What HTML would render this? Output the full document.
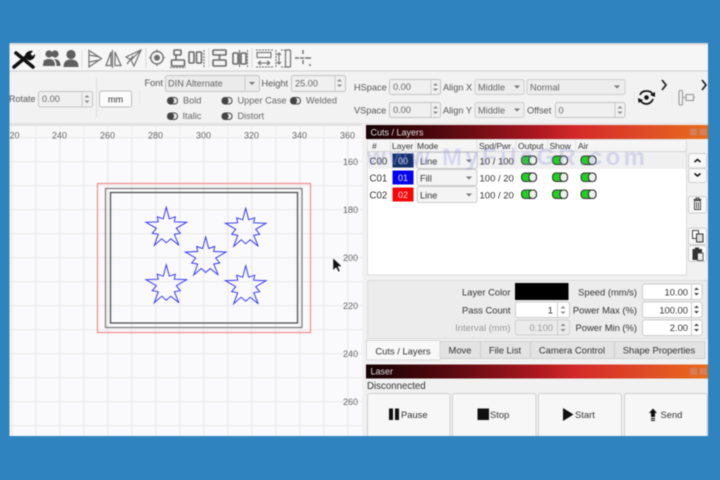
<!DOCTYPE html>
<html><head><meta charset="utf-8"><style>
html,body{margin:0;padding:0;width:720px;height:480px;overflow:hidden;background:#2f83bf}
svg{display:block;filter:blur(.45px)}
text{font-family:"Liberation Sans",sans-serif;font-size:9.2px;fill:#333}
.g text{fill:#666;font-size:9px}
.p text{font-size:9.4px}
.e{text-anchor:end}.m{text-anchor:middle}
</style></head><body>
<svg width="720" height="480" viewBox="0 0 720 480" xmlns="http://www.w3.org/2000/svg">
<defs>
<linearGradient id="bar" x1="0" x2="1" y1="0" y2="0">
<stop offset="0" stop-color="#160306"/><stop offset=".1" stop-color="#300508"/><stop offset=".25" stop-color="#5a0a10"/><stop offset=".5" stop-color="#ab1820"/><stop offset=".62" stop-color="#d42a2a"/><stop offset=".82" stop-color="#df4c26"/><stop offset="1" stop-color="#e96c1c"/>
</linearGradient>
<g id="on"><rect x=".5" y=".5" width="15" height="8.5" rx="3.5" fill="#1fd01f" stroke="#333"/><rect x="8" y=".5" width="7.5" height="8.5" rx="3.5" fill="#eef2ee" stroke="#333" stroke-width="1.1"/></g>
<g id="off"><rect x=".5" y=".5" width="10" height="6.5" rx="3" fill="#e8e8e8" stroke="#444"/><rect x=".5" y=".5" width="6.5" height="6.5" rx="3" fill="#444"/></g>
<g id="ar"><path d="M-2.5-1.5L0-4 2.5-1.5z M-2.5 1.5L0 4 2.5 1.5z" fill="#888"/></g>
<g id="ard"><path d="M-2.5-1.5L0-4 2.5-1.5z M-2.5 1.5L0 4 2.5 1.5z" fill="#444"/></g>
<path id="dn" d="M-3-1.5H3L0 1.5z" fill="#777"/>
<path id="star" d="M0-19.5L3-8 9-10 8-5 20.3-4.5 10 1.5 14 6.5 8 7.5 12.6 18.5 4.5 12 0 16-4.500 12-12 18.5-8 7.5-14 6.5-10 1.5-20.3-4.5-8-5-9-10-3-8z" fill="none" stroke="#3030f8" stroke-width=".95"/>
<pattern id="grid" x="35.2" y="137" width="24" height="24" patternUnits="userSpaceOnUse"><rect width="24" height="24" fill="#fafafc"/><rect width="1.2" height="24" fill="#e8e8e8"/><rect y="0" width="24" height="1.2" fill="#ebebeb"/></pattern>
</defs>

<rect x="9.5" y="43" width="698.5" height="393" fill="#f1f1f1"/>
<rect x="9.5" y="43" width="698.500" height="2" fill="#dcdcdc"/>
<rect x="9.5" y="45" width="698.5" height="26" fill="#f6f6f6"/>
<rect x="9.5" y="70.5" width="698.5" height="1" fill="#cfcfcf"/>
<rect x="9.5" y="71.5" width="698.5" height="52" fill="#f2f2f3"/>
<rect x="9.5" y="123" width="698.5" height="3" fill="#e2e2e2"/>

<g>
<path d="M16 53L33 67M14 67L26 57" stroke="#111" stroke-width="3.6" fill="none" stroke-linecap="round"/>
<path d="M25 58C24 53 29 50 33 51L30.500 54 32.500 56 35 54C35.500 58 32 61 28 60z" fill="#111"/>
</g>
<path d="M37 50V68M39.5 50V68" stroke="#ddd" stroke-dasharray="1 1.2"/>
<g fill="#5f5f5f">
<circle cx="49" cy="54" r="3.6"/><circle cx="55" cy="54" r="3.6"/><path d="M43 66C43 60 46 59 49 59 52 59 55 60 55 66z"/><path d="M54 59C58 59 60.5 61 60.5 66H56.5C56.5 63 56 61 54 59z"/><path d="M44 60h2v6h-3z"/>
<circle cx="71" cy="54.5" r="4.6"/><path d="M63.5 67C63.5 61 67 59.5 71 59.5 75 59.5 78.5 61 78.5 67z"/>
</g>
<path d="M82 50V68" stroke="#e0e0e0"/>
<g fill="none" stroke="#707070" stroke-width="1.200">
<path d="M89 50.5V67L101.5 58.5z M89 55L100 57M89 62L100 60"/>
<path d="M112.5 50V68M111 52V65.5H106zM115 52V65.5H121z"/>
<path d="M126 57L141 50 134 66 131 60zM131 60L141 50M127 64L133 56"/>
<path d="M146 48V68" stroke="#ddd"/>
<circle cx="157" cy="57.7" r="6.2" stroke-width="1.4"/><circle cx="157" cy="57.7" r="2.4" fill="#707070"/><path d="M157 49.5V51.5M157 64V66M149 57.7H151M163 57.7H165"/>
</g>
<g fill="none" stroke="#6a6a6a" stroke-width="1.6">
<rect x="174" y="50" width="7" height="5" rx="1"/><rect x="171.5" y="60" width="13" height="6" rx="1"/><path d="M176 55V60"/><path d="M170 67.5H186" stroke-dasharray="2 1" stroke-width="1"/>
<rect x="189" y="52" width="5" height="11" rx="1"/><rect x="196.5" y="52" width="5" height="11" rx="1"/><path d="M204 50V67" stroke-dasharray="2 1" stroke-width="1"/>
<path d="M209 48V68" stroke="#ddd" stroke-width="1"/>
<rect x="213" y="50" width="13" height="5" rx="1"/><rect x="213" y="60" width="13" height="6" rx="1"/><path d="M219.500 55V60"/>
<rect x="233" y="53" width="5" height="11" rx="1"/><rect x="241" y="53" width="5" height="11" rx="1"/><path d="M239.500 50V67" stroke-width="1.1"/><path d="M247.500 50V67" stroke-dasharray="2 1" stroke-width="1"/>
</g>
<g fill="none" stroke="#707070" stroke-width="1.100">
<path d="M252 48V68" stroke="#ddd"/>
<path d="M256 50H273M256 67H273" stroke-dasharray="2 1"/><rect x="257" y="52.500" width="14" height="5"/><path d="M258 63H270M258 63L261 61M258 63L261 65M270 63L267 61M270 63L267 65"/>
<path d="M276 50V67M281 50H286M281 67H286" stroke-dasharray="2 1"/><path d="M279 53V64M277 55L279 53 281 55M277 62L279 64 281 62"/>
<rect x="285.500" y="50" width="5" height="17" rx="1" stroke-width="1.2"/>
<path d="M295 58H299M305 58H311M303 50V54M303 60V64M309 65H311" stroke-width="1.4"/><path d="M300 58H304" stroke-width="1.4"/>
</g>

<text x="9" y="102" style="font-size:9px;fill:#555">Rotate</text>
<rect x="38.500" y="91.500" width="54" height="15.500" rx="2" fill="#f0f0f0" stroke="#c4c4c4"/><path d="M82 92V107" stroke="#ccc"/>
<text x="42" y="102" style="fill:#666">0.00</text><use href="#ar" x="87" y="99"/>
<path d="M96.500 78V118" stroke="#ddd"/>
<rect x="99.500" y="91" width="32" height="16" rx="2" fill="#fbfbfb" stroke="#bdbdbd"/>
<text x="115.500" y="102.500" class="m">mm</text>
<path d="M139.500 91V104" stroke="#d8d8d8" stroke-dasharray="1 1.2"/>

<text x="144.500" y="86" style="fill:#555">Font</text>
<rect x="165.500" y="75.500" width="94" height="16" rx="2" fill="#ebebeb" stroke="#c4c4c4"/>
<path d="M245 76V91" stroke="#ccc"/>
<text x="168" y="86.500" style="fill:#666">DIN Alternate</text><use href="#dn" x="252" y="83.500"/>
<text x="261.500" y="86.500" style="fill:#555">Height</text>
<rect x="291.500" y="75.500" width="54" height="16" rx="2" fill="#f0f0f0" stroke="#c4c4c4"/><path d="M335 76V91" stroke="#ccc"/>
<text x="295" y="86.500" style="fill:#666">25.00</text><use href="#ar" x="339.500" y="83"/>

<use href="#off" x="167" y="97"/><text x="183" y="103.500" style="fill:#666">Bold</text>
<use href="#off" x="221.500" y="97"/><text x="237.500" y="103.500" style="fill:#666">Upper Case</text>
<use href="#off" x="290" y="97"/><text x="306" y="103.500" style="fill:#666">Welded</text>
<use href="#off" x="167" y="112.500"/><text x="182.500" y="119" style="fill:#666">Italic</text>
<use href="#off" x="221.500" y="112.500"/><text x="237.500" y="119" style="fill:#666">Distort</text>

<text x="354" y="90.500" style="fill:#555">HSpace</text>
<rect x="389.500" y="79.500" width="51" height="15" rx="2" fill="#f0f0f0" stroke="#c4c4c4"/><path d="M431 80V94" stroke="#ccc"/>
<text x="393" y="90" style="fill:#666">0.00</text><use href="#ar" x="435.500" y="87"/>
<text x="354" y="113.500" style="fill:#555">VSpace</text>
<rect x="389.500" y="102.500" width="51" height="15" rx="2" fill="#f0f0f0" stroke="#c4c4c4"/><path d="M431 103V117" stroke="#ccc"/>
<text x="393" y="113" style="fill:#666">0.00</text><use href="#ar" x="435.500" y="110"/>

<text x="443" y="90.500" style="fill:#555">Align X</text>
<rect x="475" y="79.500" width="49" height="15" rx="2" fill="#ededed" stroke="#cfcfcf"/><text x="478" y="90.500" style="fill:#666">Middle</text><use href="#dn" x="517" y="87"/>
<rect x="527" y="79.500" width="98" height="15" rx="2" fill="#ededed" stroke="#cfcfcf"/><text x="530" y="90.500" style="fill:#666">Normal</text><use href="#dn" x="617" y="87"/>
<text x="443" y="113.500" style="fill:#555">Align Y</text>
<rect x="475" y="102.500" width="49" height="15" rx="2" fill="#ededed" stroke="#cfcfcf"/><text x="478" y="113.500" style="fill:#666">Middle</text><use href="#dn" x="517" y="110"/>
<text x="527" y="113.500" style="fill:#555">Offset</text>
<rect x="555.500" y="102.500" width="69.500" height="15" rx="2" fill="#f0f0f0" stroke="#c4c4c4"/><path d="M615 103V117" stroke="#ccc"/>
<text x="558.500" y="113.500" style="fill:#666">0</text><use href="#ar" x="620" y="110"/>

<path d="M634 92V104M672 92V104" stroke="#d8d8d8" stroke-dasharray="1 1.200"/>
<path d="M662 80L666 85 662 90M702 80L706 85 702 90" fill="none" stroke="#222" stroke-width="1.700"/>
<g fill="none" stroke="#111" stroke-width="1.800">
<path d="M640 95C641 92 644 91 646.500 91 649 91 651.500 92 652.500 94"/><path d="M653 99C652 102 649 104 646.500 104 644 104 641.500 102.500 640.500 100.500"/>
</g>
<path d="M650 95L655 92 655 97zM643 100L638 98 638.500 103z" fill="#111"/>
<circle cx="646.500" cy="97.500" r="2.300" fill="#111"/>
<g fill="none" stroke="#999" stroke-width="1.100"><rect x="679" y="90.500" width="3.500" height="14.500" rx="1"/><rect x="686" y="94.500" width="7.500" height="6"/><path d="M682.500 97.500H686M693.500 97.500H695"/></g>

<rect x="9.500" y="126" width="352.500" height="310" fill="url(#grid)"/>
<rect x="9.500" y="126" width="352.500" height="11" fill="#f6f6f6" opacity=".55"/>
<g class="g">
<text x="9.500" y="138.500">20</text><text x="59.500" y="138.500" class="m">240</text><text x="107.500" y="138.500" class="m">260</text><text x="155.500" y="138.500" class="m">280</text><text x="203.500" y="138.500" class="m">300</text><text x="251.500" y="138.500" class="m">320</text><text x="299.500" y="138.500" class="m">340</text><text x="347.500" y="138.500" class="m">360</text>
<text x="358" y="165" class="e">160</text><text x="358" y="213" class="e">180</text><text x="358" y="261" class="e">200</text><text x="358" y="309" class="e">220</text><text x="358" y="357" class="e">240</text><text x="358" y="405" class="e">260</text>
</g>
<rect x="97.500" y="183.500" width="213" height="149" fill="none" stroke="#f48a8a" stroke-width="1.200"/>
<rect x="105.500" y="188.500" width="196.500" height="139" fill="none" stroke="#777" stroke-width="1.200"/>
<rect x="110.500" y="192.500" width="187" height="130.500" fill="none" stroke="#444" stroke-width="1.200"/>
<use href="#star" x="166.300" y="226.800"/><use href="#star" x="245.700" y="227.800"/><use href="#star" x="205.700" y="256.500"/><use href="#star" x="166.300" y="284.200"/><use href="#star" x="245.700" y="285.200"/>
<path d="M333 258V270.500L336 267.500 338.500 272 340 271 338 266.500 342 266.500z" fill="#111" stroke="#fff" stroke-width=".5"/>

<rect x="362" y="124" width="346" height="312" fill="#f1f1f1"/>
<rect x="366" y="125" width="342" height="14" fill="url(#bar)"/>
<text x="370.500" y="135.500" style="fill:#ddd;font-size:9px">Cuts / Layers</text>
<rect x="690" y="128.500" width="7" height="7" fill="#c89080" opacity=".6"/><rect x="699.500" y="128.500" width="7" height="7" fill="#c89080" opacity=".6"/>

<rect x="367.500" y="139.500" width="319" height="135.500" fill="#fff" stroke="#ddd"/>
<rect x="368" y="140" width="318" height="11" fill="#f5f5f5"/>
<path d="M368 151.500H686" stroke="#d5d5d5"/>
<path d="M390.500 140V151M415.500 140V151M477 140V151M516 140V151M547.500 140V151M575.500 140V151" stroke="#e2e2e2"/>
<text x="372" y="149" style="font-size:8.500px">#</text><text x="392" y="149" style="font-size:8.500px">Layer</text><text x="417" y="149" style="font-size:8.500px">Mode</text><text x="479" y="149" style="font-size:8.500px">Spd/Pwr</text><text x="518" y="149" style="font-size:8.500px">Output</text><text x="549.500" y="149" style="font-size:8.500px">Show</text><text x="578" y="149" style="font-size:8.500px">Air</text>
<rect x="368" y="152" width="318" height="17" fill="#f0f0f0"/>

<text x="369.500" y="164.500" style="font-size:9.700px">C00</text>
<rect x="392.500" y="153.500" width="21" height="14" fill="#11306a"/><text x="403" y="164" class="m" style="fill:#c8d0e8;font-size:9px">00</text>
<rect x="417" y="152.500" width="60" height="16" rx="2" fill="#f4f4f4" stroke="#ccc"/><text x="420" y="164.500">Line</text><use href="#dn" x="469" y="161"/>
<text x="479.500" y="164.500" style="font-size:9.500px">10 / 100</text>
<use href="#on" x="521" y="155.500"/><use href="#on" x="552" y="155.500"/><use href="#on" x="580.500" y="155.500"/>

<text x="369.500" y="181.500" style="font-size:9.700px">C01</text>
<rect x="392.500" y="170.500" width="21" height="14" fill="#0606ee"/><text x="403" y="181" class="m" style="fill:#dde;font-size:9px">01</text>
<rect x="417" y="169.500" width="60" height="16" rx="2" fill="#f4f4f4" stroke="#ccc"/><text x="420" y="181.500">Fill</text><use href="#dn" x="469" y="178"/>
<text x="479.500" y="181.500" style="font-size:9.500px">100 / 20</text>
<use href="#on" x="521" y="172.500"/><use href="#on" x="552" y="172.500"/><use href="#on" x="580.500" y="172.500"/>

<text x="369.500" y="198.500" style="font-size:9.700px">C02</text>
<rect x="392.500" y="187.500" width="21" height="14" fill="#f50808"/><text x="403" y="198" class="m" style="fill:#fdd;font-size:9px">02</text>
<rect x="417" y="186.500" width="60" height="16" rx="2" fill="#f4f4f4" stroke="#ccc"/><text x="420" y="198.500">Line</text><use href="#dn" x="469" y="195"/>
<text x="479.500" y="198.500" style="font-size:9.500px">100 / 20</text>
<use href="#on" x="521" y="189.500"/><use href="#on" x="552" y="189.500"/><use href="#on" x="580.500" y="189.500"/>

<text x="367" y="165" style="font-size:24px;font-weight:bold;letter-spacing:3.300px;fill:#8f8fe0;opacity:.28">www.MyFileGR.com</text>

<g fill="#f8f8f8" stroke="#cfcfcf">
<rect x="688.500" y="153.500" width="18" height="14.500" rx="2"/><rect x="688.500" y="168.500" width="18" height="14" rx="2"/><rect x="688.500" y="196.500" width="18" height="16.500" rx="2"/><rect x="688.500" y="228" width="18" height="16.500" rx="2"/><rect x="688.500" y="245.500" width="18" height="16" rx="2"/>
</g>
<path d="M694.500 162L697.500 159.500 700.500 162M694.500 173.500L697.500 176 700.500 173.500" fill="none" stroke="#111" stroke-width="1.600"/>
<path d="M693.500 199.500H701.500M696 199V198H699V199" stroke="#444" fill="none"/><path d="M694.500 200.500V209.500H700.500V200.500zM696.500 202V208.500M698.500 202V208.500" fill="none" stroke="#444" stroke-width=".9"/>
<rect x="692.500" y="230.500" width="6" height="8" fill="#fff" stroke="#444"/><rect x="696.500" y="234" width="6.500" height="8" fill="#ddd" stroke="#333"/>
<rect x="692.500" y="249" width="9.500" height="11" fill="#333"/><rect x="695" y="247.500" width="4" height="2.500" fill="#333"/><rect x="697.500" y="253" width="5.500" height="7.500" fill="#eee" stroke="#333" stroke-width=".8"/>

<rect x="367.500" y="280.500" width="339.500" height="58" fill="#ececec" stroke="#dedede"/>
<g class="p">
<text x="510.500" y="295.500" class="e">Layer Color</text>
<rect x="515" y="283" width="53.500" height="17" fill="#000"/>
<text x="510.500" y="313.500" class="e">Pass Count</text>
<rect x="515.500" y="302" width="54" height="15.500" rx="2" fill="#fff" stroke="#ccc"/><path d="M557.500 302V317" stroke="#ccc"/><text x="553" y="313.500" class="e">1</text><use href="#ar" x="563" y="310"/>
<text x="510.500" y="331" class="e" style="fill:#999">Interval (mm)</text>
<rect x="515.500" y="320" width="54" height="15" rx="2" fill="#ebebeb" stroke="#d0d0d0"/><path d="M557.500 320V335" stroke="#ccc"/><text x="553" y="331" class="e" style="fill:#999">0.100</text><use href="#ar" x="563" y="327.500"/>
<text x="637" y="295.500" class="e">Speed (mm/s)</text>
<text x="637" y="313.500" class="e">Power Max (%)</text>
<text x="637" y="331" class="e">Power Min (%)</text>
<rect x="642.500" y="284" width="59.500" height="15.500" rx="2" fill="#fff" stroke="#ccc"/><path d="M691.500 284V299.500" stroke="#ccc"/><text x="688" y="295.500" class="e">10.00</text><use href="#ard" x="696.500" y="291.500"/>
<rect x="642.500" y="302" width="59.500" height="15.500" rx="2" fill="#fff" stroke="#ccc"/><path d="M691.500 302V317.500" stroke="#ccc"/><text x="688" y="313.500" class="e">100.00</text><use href="#ard" x="696.500" y="309.500"/>
<rect x="642.500" y="320" width="59.500" height="15.500" rx="2" fill="#fff" stroke="#ccc"/><path d="M691.500 320V335.500" stroke="#ccc"/><text x="688" y="331" class="e">2.00</text><use href="#ard" x="696.500" y="327.500"/>
</g>

<rect x="440" y="341.500" width="265" height="17" fill="#e3e3e3" stroke="#d0d0d0"/>
<path d="M480.500 342V358M530.500 342V358M614.500 342V358" stroke="#cfcfcf"/>
<rect x="366.500" y="340.500" width="73.500" height="19.500" fill="#f8f8f8" stroke="#d8d8d8"/>
<g class="p">
<text x="403" y="354.500" class="m">Cuts / Layers</text>
<text x="460" y="353.500" class="m">Move</text>
<text x="505" y="353.500" class="m">File List</text>
<text x="572" y="353.500" class="m">Camera Control</text>
<text x="659" y="353.500" class="m">Shape Properties</text>
</g>

<rect x="366" y="364.500" width="342" height="14" fill="url(#bar)"/>
<text x="370.500" y="374.500" style="fill:#ddd;font-size:9px">Laser</text>
<rect x="690" y="368" width="7" height="7" fill="#c89080" opacity=".6"/><rect x="699.500" y="368" width="7" height="7" fill="#c89080" opacity=".6"/>
<text x="367" y="389" style="font-size:9.700px">Disconnected</text>
<g fill="#f7f7f7" stroke="#cfcfcf">
<rect x="367.500" y="393.500" width="82.500" height="50" rx="2"/><rect x="452.500" y="393.500" width="83.500" height="50" rx="2"/><rect x="538.500" y="393.500" width="83" height="50" rx="2"/><rect x="624.500" y="393.500" width="82.500" height="50" rx="2"/>
</g>
<rect x="389" y="408.500" width="4" height="11.500" fill="#111"/><rect x="395" y="408.500" width="4" height="11.500" fill="#111"/>
<g class="p">
<text x="401" y="418">Pause</text>
<text x="490" y="418">Stop</text>
<text x="575" y="418">Start</text>
<text x="660.500" y="418">Send</text>
</g>
<rect x="477.500" y="408.500" width="11.500" height="11.500" fill="#111"/>
<path d="M563 408L573.500 414.500 563 421z" fill="#111"/>
<path d="M653 408.500L657 413H655V417H651V413H649z" fill="#111"/><rect x="651" y="418" width="4" height="1.200" fill="#111"/><rect x="651" y="420" width="4" height="1" fill="#111"/>

<rect x="0" y="0" width="720" height="43" fill="#2f83bf"/>
<rect x="0" y="436" width="720" height="44" fill="#2f83bf"/>
<rect x="0" y="0" width="9.500" height="480" fill="#2f83bf"/>
<rect x="708" y="0" width="12" height="480" fill="#2f83bf"/>
</svg>
</body></html>
